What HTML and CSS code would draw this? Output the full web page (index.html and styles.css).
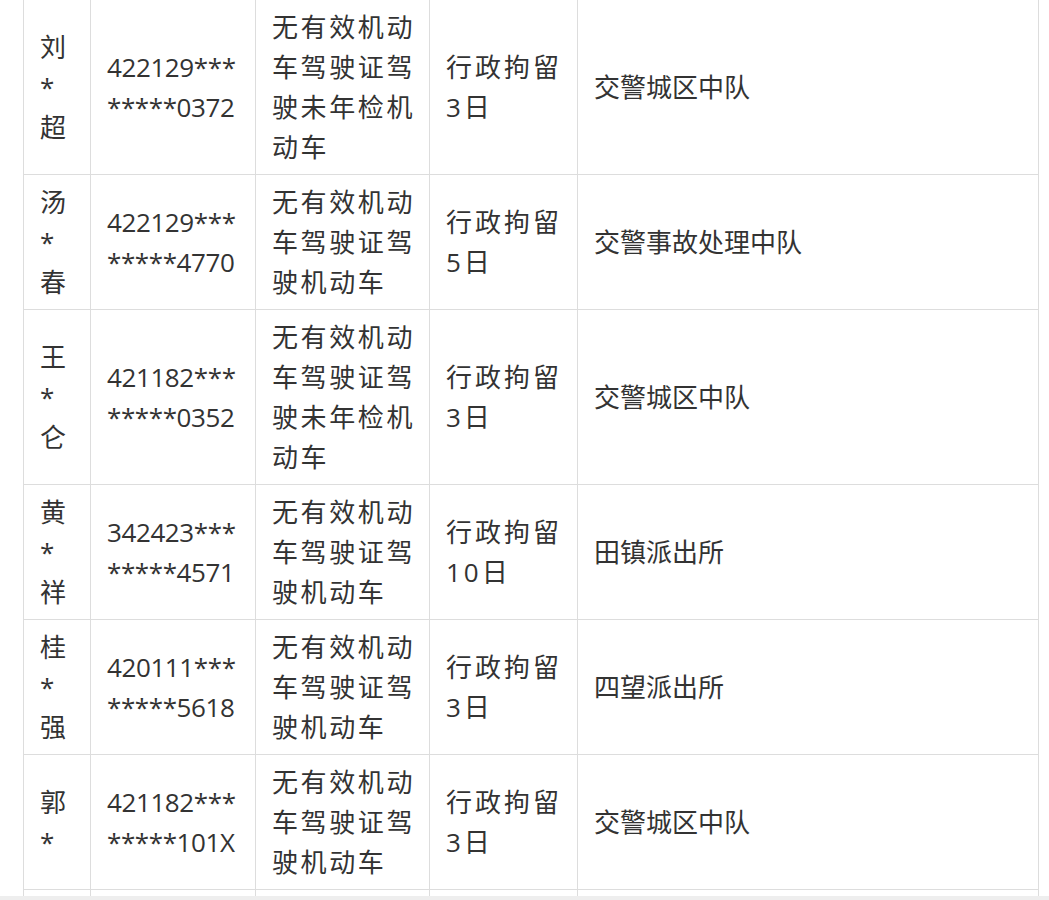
FILE: index.html
```html
<!DOCTYPE html>
<html lang="zh-CN">
<head>
<meta charset="utf-8">
<title>处罚名单</title>
<link rel="stylesheet" href="styles.css">
</head>
<body>
<div class="page">
  <table class="list">
    <colgroup>
      <col class="c-name">
      <col class="c-id">
      <col class="c-reason">
      <col class="c-penalty">
      <col class="c-unit">
    </colgroup>
    <tbody>
      <tr>
        <td>刘*超</td>
        <td class="id">422129********0372</td>
        <td class="reason">无有效机动车驾驶证驾驶未年检机动车</td>
        <td class="penalty">行政拘留3日</td>
        <td>交警城区中队</td>
      </tr>
      <tr>
        <td>汤*春</td>
        <td class="id">422129********4770</td>
        <td class="reason">无有效机动车驾驶证驾驶机动车</td>
        <td class="penalty">行政拘留5日</td>
        <td>交警事故处理中队</td>
      </tr>
      <tr>
        <td>王*仑</td>
        <td class="id">421182********0352</td>
        <td class="reason">无有效机动车驾驶证驾驶未年检机动车</td>
        <td class="penalty">行政拘留3日</td>
        <td>交警城区中队</td>
      </tr>
      <tr>
        <td>黄*祥</td>
        <td class="id">342423********4571</td>
        <td class="reason">无有效机动车驾驶证驾驶机动车</td>
        <td class="penalty">行政拘留10日</td>
        <td>田镇派出所</td>
      </tr>
      <tr>
        <td>桂*强</td>
        <td class="id">420111********5618</td>
        <td class="reason">无有效机动车驾驶证驾驶机动车</td>
        <td class="penalty">行政拘留3日</td>
        <td>四望派出所</td>
      </tr>
      <tr>
        <td>郭*</td>
        <td class="id">421182********101X</td>
        <td class="reason">无有效机动车驾驶证驾驶机动车</td>
        <td class="penalty">行政拘留3日</td>
        <td>交警城区中队</td>
      </tr>
      <tr>
        <td>&nbsp;</td>
        <td>&nbsp;</td>
        <td>&nbsp;</td>
        <td>&nbsp;</td>
        <td>&nbsp;</td>
      </tr>
    </tbody>
  </table>
</div>
<div class="bar"></div>
</body>
</html>
```
FILE: styles.css
```css
html, body {
  margin: 0;
  padding: 0;
  background: #fff;
  overflow: hidden;
}

.page {
  height: 896px;
  overflow: hidden;
  padding-left: 23px;
}

.bar {
  height: 4px;
  background: #eeeeee;
}

.list {
  margin-top: -1px;
  border-collapse: collapse;
  table-layout: fixed;
  width: 1015px;
  font-family: "Open Sans", "Noto Sans CJK SC", sans-serif;
  font-size: 26px;
  line-height: 40px;
  color: #333;
}

.c-name { width: 67px; }
.c-id { width: 165px; }
.c-reason { width: 174px; }
.c-penalty { width: 148px; }
.c-unit { width: 461px; }

.list td {
  border: 1px solid #dddddd;
  padding: 7px 16px;
  vertical-align: middle;
  text-align: left;
  word-break: break-all;
}

.list .reason {
  letter-spacing: 2.6px;
  padding-right: 13px;
}

.list .penalty {
  letter-spacing: 3px;
  padding-right: 12px;
}

.list .id {
  letter-spacing: -0.4px;
}
```
